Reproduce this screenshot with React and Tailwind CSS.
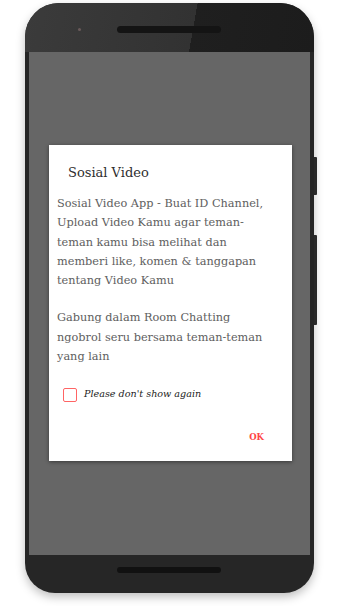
import React from "react";

export default function App() {
  const font = { fontFamily: '"DejaVu Serif", "Liberation Serif", serif' };
  const p1 = [
    "Sosial Video App - Buat ID Channel,",
    "Upload Video Kamu agar teman-",
    "teman kamu bisa melihat dan",
    "memberi like, komen & tanggapan",
    "tentang Video Kamu",
  ];
  const p2 = [
    "Gabung dalam Room Chatting",
    "ngobrol seru bersama teman-teman",
    "yang lain",
  ];
  return (
    <div className="w-[340px] h-[606px] bg-white overflow-hidden">
      <div className="flex pt-[3px] pl-[25px]">
        <div className="w-[289px] h-[590px] rounded-t-[34px] rounded-b-[30px] bg-[#262626] overflow-hidden flex flex-col shadow-[0_4px_10px_rgba(0,0,0,0.25)]">
          <div className="h-[49px] shrink-0 bg-[linear-gradient(100deg,#3b3b3b_0%,#323232_58%,#1f1f1f_58%,#1c1c1c_100%)] flex items-center pl-[53px] pt-[3px]">
            <div className="w-[3px] h-[3px] rounded-full bg-[#6a5a5a]" />
            <div className="ml-[36px] w-[104px] h-[7px] rounded-full bg-[#141414]" />
          </div>
          <div className="mx-[4px] h-[503px] shrink-0 bg-[#666666] pt-[93px] pl-[20px]">
            <div className="w-[243px] h-[316px] bg-white shadow-[0_1px_4px_rgba(0,0,0,0.45)] flex flex-col" style={font}>
              <div className="pl-[19px] pt-[20px] text-[13px] text-[#2e2e2e] leading-[16px]">Sosial Video</div>
              <div className="pl-[8px] pt-[13px] text-[11.3px] leading-[19.3px] text-[#5e5e5e] whitespace-nowrap">
                {p1.map((l) => (
                  <div key={l}>{l}</div>
                ))}
              </div>
              <div className="pl-[8px] pt-[18px] text-[11.3px] leading-[19.3px] text-[#5e5e5e] whitespace-nowrap">
                {p2.map((l) => (
                  <div key={l}>{l}</div>
                ))}
              </div>
              <div className="flex items-center pl-[14px] pt-[21px]">
                <div className="w-[14px] h-[14px] border-[1.5px] border-[#ff6464] rounded-[2px]" />
                <span className="ml-[7px] text-[9.6px] italic text-[#222]">Please don't show again</span>
              </div>
              <div className="flex justify-end pr-[28px] pt-[29px]">
                <span className="text-[8.5px] font-bold text-[#ff4545]">OK</span>
              </div>
            </div>
          </div>
          <div className="flex-1 flex justify-center pt-[12px]">
            <div className="ml-[-2px] w-[104px] h-[6px] rounded-full bg-[#111111]" />
          </div>
        </div>
        <div className="flex flex-col pt-[154px]">
          <div className="w-[3px] h-[38px] bg-[#2a2a2a] rounded-r-[1px]" />
          <div className="mt-[40px] w-[3px] h-[90px] bg-[#2a2a2a] rounded-r-[1px]" />
        </div>
      </div>
    </div>
  );
}
